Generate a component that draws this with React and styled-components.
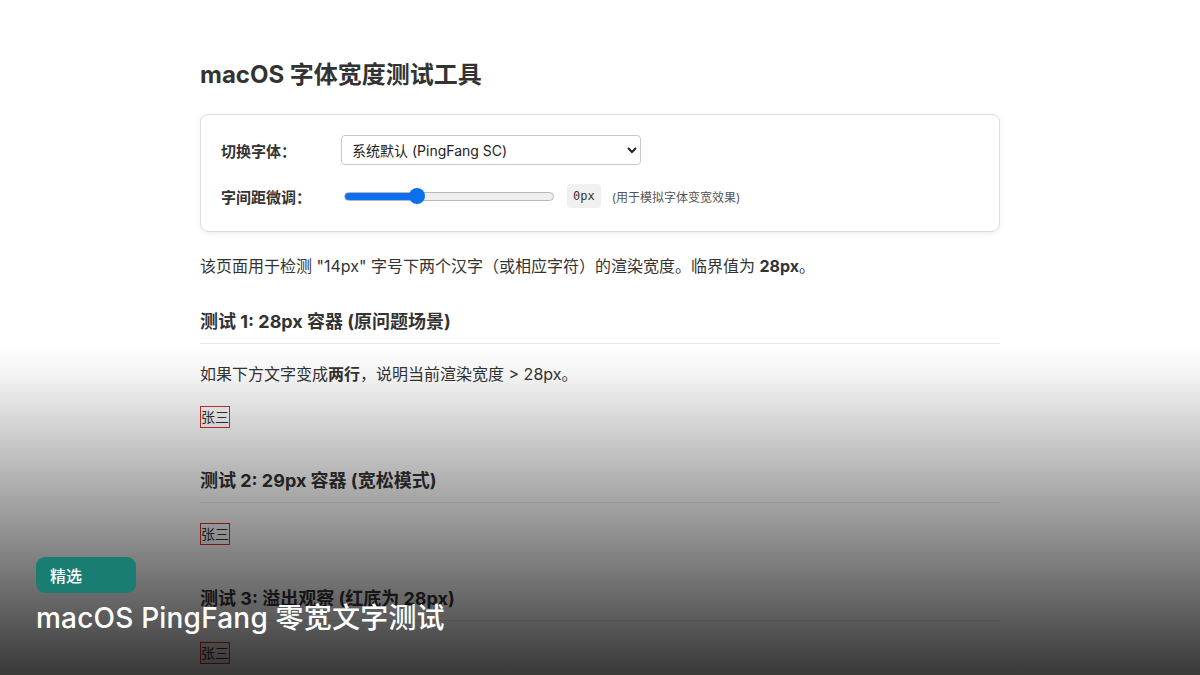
import React, { useState } from "react";
import styled, { createGlobalStyle } from "styled-components";

const Global = createGlobalStyle`
  html, body { margin: 0; padding: 0; background: #fff; }
  body {
    font-family: Inter, "Noto Sans CJK SC", sans-serif;
    color: #333;
    overflow: hidden;
  }
  * { box-sizing: border-box; }
`;

const Page = styled.div`
  position: relative;
  width: 1200px;
  height: 675px;
  overflow: hidden;
`;

const Container = styled.main`
  width: 800px;
  margin: 0 auto;
  padding-top: 60px;
`;

const Title = styled.h2`
  margin: 0;
  font-size: 24px;
  line-height: 30px;
  font-weight: 700;
  color: #333;
`;

const Panel = styled.section`
  margin-top: 24px;
  border: 1px solid #ddd;
  border-radius: 8px;
  padding: 20px 20px 22px;
  box-shadow: 0 2px 6px rgba(0, 0, 0, 0.06);
  display: flex;
  flex-direction: column;
  gap: 18px;
`;

const Row = styled.div`
  display: flex;
  align-items: center;
  min-height: ${(p) => p.$h}px;
`;

const Label = styled.label`
  width: 120px;
  flex: none;
  font-size: 15px;
  font-weight: 600;
  color: #333;
`;

const Select = styled.select`
  width: 300px;
  height: 30px;
  font-family: Inter, "Noto Sans CJK SC", sans-serif;
  font-size: 14px;
  color: #222;
  padding: 0 6px;
  border: 1px solid #c8c8c8;
  border-radius: 4px;
  background: #fff;
`;

const Range = styled.input`
  -webkit-appearance: none;
  appearance: none;
  width: 210px;
  height: 9px;
  margin: 0 0 0 3px;
  border-radius: 5px;
  border: 1px solid #b8b8b8;
  outline: none;
  &::-webkit-slider-thumb {
    -webkit-appearance: none;
    width: 16px;
    height: 16px;
    border-radius: 50%;
    background: #0b70f0;
    border: none;
  }
`;

const Value = styled.code`
  margin-left: 13px;
  font-family: "DejaVu Sans Mono", "Liberation Mono", monospace;
  font-size: 12px;
  color: #333;
  background: #f0f0f0;
  border-radius: 4px;
  padding: 4px 6px;
  line-height: 16px;
`;

const Note = styled.span`
  margin-left: 11px;
  font-size: 12px;
  color: #555;
`;

const Para = styled.p`
  margin: ${(p) => p.$mt}px 0 0;
  font-size: 16px;
  line-height: 24px;
  color: #333;
  b { font-weight: 700; }
`;

const Heading = styled.h3`
  margin: ${(p) => p.$mt}px 0 0;
  font-size: 18px;
  line-height: 24px;
  font-weight: 700;
  color: #333;
  padding-bottom: 9px;
  border-bottom: 1px solid #e8e8e8;
`;

const NameBox = styled.div`
  margin-top: ${(p) => p.$mt}px;
  width: ${(p) => p.$w + 2}px;
  font-size: 14px;
  line-height: 20px;
  color: #333;
  border: 1px solid #d03030;
  background: ${(p) => (p.$fill ? "rgba(255,0,0,0.08)" : "transparent")};
  white-space: ${(p) => (p.$nowrap ? "nowrap" : "normal")};
`;

const Shade = styled.div`
  position: absolute;
  inset: 0;
  pointer-events: none;
  background: linear-gradient(
    to bottom,
    rgba(0, 0, 0, 0) 0%,
    rgba(0, 0, 0, 0) 51%,
    rgba(0, 0, 0, 0.04) 55%,
    rgba(0, 0, 0, 0.78) 100%
  );
`;

const Caption = styled.div`
  position: absolute;
  left: 36px;
  bottom: 39px;
  display: flex;
  flex-direction: column;
  align-items: flex-start;
  gap: 7px;
`;

const Badge = styled.span`
  width: 100px;
  height: 36px;
  border-radius: 9px;
  background: #1a7d72;
  color: #fff;
  font-size: 16px;
  font-weight: 500;
  display: flex;
  align-items: center;
  padding-left: 14px;
`;

const CaptionTitle = styled.div`
  color: #fff;
  font-size: 28px;
  line-height: 36px;
  font-weight: 500;
  letter-spacing: 0.2px;
`;

export default function App() {
  const [spacing, setSpacing] = useState(0);
  const min = -2;
  const max = 4;
  const pct = ((spacing - min) / (max - min)) * 100;
  return (
    <Page>
      <Global />
      <Container>
        <Title>macOS 字体宽度测试工具</Title>
        <Panel>
          <Row $h={30}>
            <Label>切换字体：</Label>
            <Select defaultValue="pingfang">
              <option value="pingfang">系统默认 (PingFang SC)</option>
            </Select>
          </Row>
          <Row $h={26}>
            <Label>字间距微调：</Label>
            <Range
              type="range"
              min={min}
              max={max}
              step={0.1}
              value={spacing}
              onChange={(e) => setSpacing(Number(e.target.value))}
              style={{
                background: `linear-gradient(to right, #0b70f0 ${pct}%, #efefef ${pct}%)`,
              }}
            />
            <Value>{spacing}px</Value>
            <Note>(用于模拟字体变宽效果)</Note>
          </Row>
        </Panel>
        <Para $mt={22}>
          该页面用于检测 "14px" 字号下两个汉字（或相应字符）的渲染宽度。临界值为 <b>28px</b>。
        </Para>
        <Heading $mt={32}>测试 1: 28px 容器 (原问题场景)</Heading>
        <Para $mt={18}>
          如果下方文字变成<b>两行</b>，说明当前渲染宽度 &gt; 28px。
        </Para>
        <NameBox $mt={20} $w={28}>张三</NameBox>
        <Heading $mt={41}>测试 2: 29px 容器 (宽松模式)</Heading>
        <NameBox $mt={20} $w={28}>张三</NameBox>
        <Heading $mt={42}>测试 3: 溢出观察 (红底为 28px)</Heading>
        <NameBox $mt={21} $w={28} $fill $nowrap>张三</NameBox>
      </Container>
      <Shade />
      <Caption>
        <Badge>精选</Badge>
        <CaptionTitle>macOS PingFang 零宽文字测试</CaptionTitle>
      </Caption>
    </Page>
  );
}
